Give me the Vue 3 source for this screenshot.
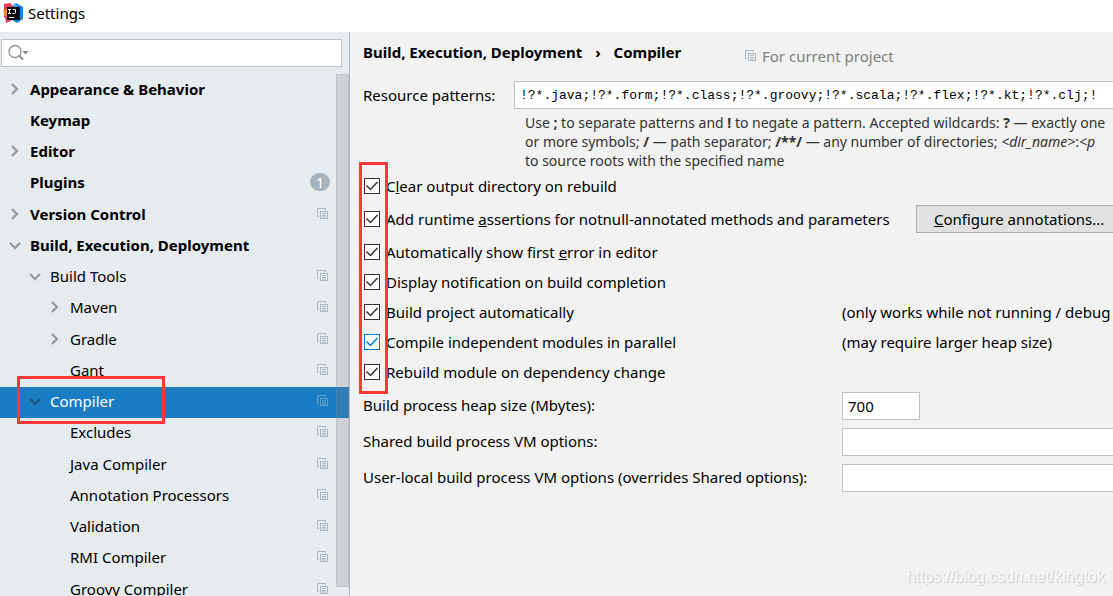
<script setup>
import { ref } from 'vue'

const tree = [
  { label: 'Appearance & Behavior', level: 0, arrow: 'right', bold: true },
  { label: 'Keymap', level: 0, bold: true },
  { label: 'Editor', level: 0, arrow: 'right', bold: true },
  { label: 'Plugins', level: 0, bold: true, badge: 1 },
  { label: 'Version Control', level: 0, arrow: 'right', bold: true, project: true },
  { label: 'Build, Execution, Deployment', level: 0, arrow: 'down', bold: true },
  { label: 'Build Tools', level: 1, arrow: 'down', project: true },
  { label: 'Maven', level: 2, arrow: 'right', project: true },
  { label: 'Gradle', level: 2, arrow: 'right', project: true },
  { label: 'Gant', level: 2, project: true },
  { label: 'Compiler', level: 1, arrow: 'down', project: true, selected: true },
  { label: 'Excludes', level: 2, project: true },
  { label: 'Java Compiler', level: 2, project: true },
  { label: 'Annotation Processors', level: 2, project: true },
  { label: 'Validation', level: 2, project: true },
  { label: 'RMI Compiler', level: 2, project: true },
  { label: 'Groovy Compiler', level: 2, project: true },
]

const options = ref([
  { id: 'clear', before: 'C', key: 'l', after: 'ear output directory on rebuild', on: true },
  { id: 'assert', before: 'Add runtime ', key: 'a', after: 'ssertions for notnull-annotated methods and parameters', on: true, button: true },
  { id: 'first-error', before: 'Automatically show first ', key: 'e', after: 'rror in editor', on: true },
  { id: 'notify', before: 'Display notification on build completion', on: true },
  { id: 'auto', before: 'Build project automatically', on: true, note: '(only works while not running / debug' },
  { id: 'parallel', before: 'Compile independent modules in parallel', on: true, note: '(may require larger heap size)', hot: true },
  { id: 'dependency', before: 'Rebuild module on dependency change', on: true },
])

const query = ref('')
const patterns = ref('!?*.java;!?*.form;!?*.class;!?*.groovy;!?*.scala;!?*.flex;!?*.kt;!?*.clj;!')
const heap = ref('700')
const sharedVm = ref('')
const localVm = ref('')
</script>

<template>
  <div class="window">
    <header class="titlebar">
      <svg class="logo" viewBox="0 0 20 20" aria-hidden="true">
        <path d="M1 1 L7 0 L10 3 L9 17 L5 19 L1 14 Z" fill="#f0385e" />
        <path d="M0 7 L6 6 L8 13 L2 14 Z" fill="#f98a2c" />
        <path d="M2 13 L10 14 L6 19 L3 20 Z" fill="#ef3f7d" />
        <path d="M10 2 L13 0 L20 4 L20 16 L14 20 L9 17 Z" fill="#1583ee" />
        <path d="M10 3 L12 0 L14 4 Z" fill="#5ab4f5" />
        <rect x="4" y="4" width="13" height="13" fill="#0b0b0b" />
        <path d="M5 6.5 h3 M6.5 6.5 v4 M5 10.5 h3 M10 6.5 h2.5 v3 q0 1 -1 1 h-2" fill="none" stroke="#fff" stroke-width="1" />
        <path d="M6 14.5 h5" stroke="#fff" stroke-width="1" />
      </svg>
      <span>Settings</span>
    </header>

    <div class="body">
      <aside class="sidebar">
        <div class="search">
          <svg class="search-icon" viewBox="0 0 22 18" aria-hidden="true">
            <circle cx="7" cy="7.5" r="6" fill="none" stroke="#8b9299" stroke-width="1.3" />
            <path d="M11 11.5 L15 15.5" stroke="#8b9299" stroke-width="2" />
            <path d="M14.5 7 h6 l-3 3.5 z" fill="#7f868d" />
          </svg>
          <input v-model="query" type="text" aria-label="Search settings" />
        </div>

        <nav class="tree-wrap" aria-label="Settings categories">
          <ul class="tree">
            <li
              v-for="item in tree"
              :key="item.label"
              :class="['item', 'level-' + item.level, { bold: item.bold, selected: item.selected }]"
            >
              <span class="arrow">
                <svg v-if="item.arrow === 'right'" viewBox="0 0 12 12" aria-hidden="true">
                  <path d="M3 1 L8 6 L3 11" />
                </svg>
                <svg v-else-if="item.arrow === 'down'" viewBox="0 0 12 12" aria-hidden="true">
                  <path d="M1 4 L6 9 L11 4" />
                </svg>
              </span>
              <a href="#">{{ item.label }}</a>
              <span v-if="item.badge" class="badge">{{ item.badge }}</span>
              <svg v-if="item.project" class="copy" viewBox="0 0 12 12" aria-hidden="true">
                <path d="M8.5 2 V.5 H.5 V8.5 H2" />
                <rect x="3.5" y="3.5" width="7" height="7" />
                <path d="M5 5.5 h4 M5 7.5 h4 M5 9 h4" />
              </svg>
              <span v-if="item.selected" class="mark mark-item"></span>
            </li>
          </ul>
          <div class="scrollbar"></div>
        </nav>
      </aside>

      <main class="content">
        <div class="heading">
          <h1>Build, Execution, Deployment <span class="sep">›</span> Compiler</h1>
          <p class="scope">
            <svg class="copy" viewBox="0 0 12 12" aria-hidden="true">
              <path d="M8.5 2 V.5 H.5 V8.5 H2" />
              <rect x="3.5" y="3.5" width="7" height="7" />
              <path d="M5 5.5 h4 M5 7.5 h4 M5 9 h4" />
            </svg>
            For current project
          </p>
        </div>

        <div class="patterns">
          <label for="patterns">Resource patterns:</label>
          <input id="patterns" v-model="patterns" class="field mono" type="text" />
        </div>
        <p class="hint">
          Use <b>;</b> to separate patterns and <b>!</b> to negate a pattern. Accepted wildcards: <b>?</b> — exactly one<br />
          or more symbols; <b>/</b> — path separator; <b>/**/</b> — any number of directories; <i>&lt;dir_name&gt;</i>:<i>&lt;p</i><br />
          to source roots with the specified name
        </p>

        <div class="options">
          <div v-for="o in options" :key="o.id" class="option" :class="{ tall: o.button }">
            <div class="choice">
              <span class="box" :class="{ hot: o.hot }">
                <input :id="o.id" v-model="o.on" type="checkbox" />
                <svg v-if="o.on" viewBox="0 0 16 16" aria-hidden="true"><path d="M2.5 7.5 L6.5 11.5 L13.5 4" /></svg>
              </span>
              <label :for="o.id">{{ o.before }}<u v-if="o.key">{{ o.key }}</u>{{ o.after }}</label>
            </div>
            <button v-if="o.button" type="button" class="configure"><u>C</u>onfigure annotations...</button>
            <span v-if="o.note">{{ o.note }}</span>
          </div>
          <span class="mark mark-options"></span>
        </div>

        <div class="row">
          <label for="heap">Build process heap size (Mbytes):</label>
          <input id="heap" v-model="heap" class="field short" type="text" />
        </div>
        <div class="row">
          <label for="shared">Shared build process VM options:</label>
          <input id="shared" v-model="sharedVm" class="field" type="text" />
        </div>
        <div class="row">
          <label for="local">User-local build process VM options (overrides Shared options):</label>
          <input id="local" v-model="localVm" class="field" type="text" />
        </div>
        <span class="watermark">https://blog.csdn.net/kingtok</span>
      </main>
    </div>
  </div>
</template>

<style>
html,
body,
#app {
  height: 100%;
}
body {
  margin: 0;
  overflow: hidden;
}
</style>

<style scoped>
* {
  box-sizing: border-box;
}
.window {
  display: flex;
  flex-direction: column;
  height: 100%;
  overflow: hidden;
  background: #fff;
  color: #000;
  font: 15px/20px "Noto Sans", "Open Sans", sans-serif;
  white-space: nowrap;
}
.titlebar {
  display: flex;
  flex: 0 0 32px;
  align-items: center;
  gap: 5px;
  padding: 0 3px 6px;
}
.logo {
  width: 20px;
  height: 20px;
}
.body {
  display: flex;
  flex: 1;
  min-height: 0;
}
.sidebar {
  flex: 0 0 350px;
  overflow: hidden;
  border-right: 1px solid #b4b6b9;
  background: #e6ebef;
}
.search {
  display: flex;
  align-items: center;
  height: 28px;
  margin: 7px 7px 7px 1px;
  padding-left: 6px;
  border: 1px solid #c2c4c6;
  background: #fff;
}
.search-icon {
  width: 22px;
  height: 18px;
}
.search input {
  flex: 1;
  min-width: 0;
  border: 0;
  outline: 0;
  background: none;
  font: inherit;
}
.tree-wrap {
  position: relative;
}
.tree {
  margin: 0;
  padding: 1px 0 0;
  list-style: none;
}
.item {
  position: relative;
  display: flex;
  align-items: center;
  height: 31px;
  padding-right: 20px;
  padding-bottom: 4px;
}
.item:nth-child(4n) {
  margin-bottom: 1px;
}
.item a {
  flex: 1;
  color: inherit;
  text-decoration: none;
}
.bold {
  font-weight: 700;
}
.level-0 {
  padding-left: 9px;
}
.level-1 {
  padding-left: 29px;
}
.level-2 {
  padding-left: 49px;
}
.arrow {
  display: flex;
  width: 21px;
}
.arrow svg {
  width: 12px;
  height: 12px;
  fill: none;
  stroke: #999c9f;
  stroke-width: 2.4;
}
.selected {
  background: #1a7dc4;
  color: #fff;
}
.selected .arrow svg {
  stroke: #1b5680;
}
.copy {
  width: 12px;
  height: 12px;
  fill: none;
  stroke: #adb8c0;
}
.selected .copy {
  stroke: #659fc5;
}
.badge {
  width: 20px;
  height: 18px;
  margin-right: -1px;
  border-radius: 9px;
  background: #a7b4bc;
  color: #fff;
  font-weight: 400;
  line-height: 18px;
  text-align: center;
}
.scrollbar {
  position: absolute;
  top: 0;
  right: 0;
  width: 13px;
  height: 513px;
  border: 1px solid rgba(150, 155, 160, 0.25);
  background: rgba(125, 125, 130, 0.22);
}
.mark {
  position: absolute;
  border: 3px solid #fb3737;
  pointer-events: none;
}
.mark-item {
  z-index: 1;
  top: -11px;
  left: 17px;
  width: 148px;
  height: 48px;
}
.mark-options {
  top: -9px;
  bottom: -7px;
  left: -4px;
  width: 29px;
}
.content {
  position: relative;
  flex: 1;
  min-width: 0;
  overflow: hidden;
  padding-left: 13px;
  background: #f2f2f2;
}
.heading {
  display: flex;
  gap: 60px;
  height: 45px;
  padding-top: 10px;
}
.heading h1 {
  min-width: 322px;
  margin: 0;
  font: inherit;
  font-weight: 700;
}
.sep {
  margin: 0 9px;
}
.scope {
  display: flex;
  align-items: center;
  gap: 5px;
  height: 20px;
  margin: 4px 0 0;
  color: #808080;
}
.patterns {
  display: grid;
  grid-template-columns: 151px 1fr;
  align-items: center;
  height: 36px;
}
.field {
  min-width: 0;
  height: 28px;
  margin-right: -20px;
  padding: 0 5px;
  border: 1px solid #c2c2c2;
  border-radius: 0;
  outline: 0;
  background: #fff;
  color: #000;
  font: inherit;
}
.field.mono {
  font: 13px "Liberation Mono", monospace;
}
.hint {
  margin: 0 0 1px 162px;
  color: #333;
  font-size: 14px;
  line-height: 19px;
}
.options {
  position: relative;
}
.option {
  display: grid;
  grid-template-columns: 479px 1fr;
  align-items: center;
  height: 30px;
}
.option.tall {
  grid-template-columns: 553px 1fr;
  height: 36px;
}
.choice {
  display: flex;
  align-items: center;
  gap: 6px;
}
.box {
  position: relative;
  display: flex;
  width: 17px;
  height: 16px;
  color: #333;
}
.box.hot {
  color: #0078d7;
}
.box input {
  width: 16px;
  height: 16px;
  margin: 0 0 0 1px;
  border: 1px solid currentColor;
  appearance: none;
  background: #fff;
  color: inherit;
}
.box svg {
  position: absolute;
  top: 0;
  left: 1px;
  width: 16px;
  height: 16px;
  fill: none;
  pointer-events: none;
  stroke: currentColor;
  stroke-width: 1.5;
}
.configure {
  justify-self: start;
  height: 28px;
  padding: 0 17px;
  border: 1px solid #adadad;
  background: #e1e1e1;
  color: #000;
  font: inherit;
}
.row {
  display: grid;
  grid-template-columns: 479px 1fr;
  align-items: center;
  height: 36px;
}
.row .field {
  margin-top: 2px;
}
.short {
  width: 78px;
}
.watermark {
  position: absolute;
  right: 8px;
  bottom: 9px;
  color: #f8f8f8;
  font: 16px/20px "Liberation Sans", sans-serif;
  text-shadow: 1px 1px 1px #c8c8c8;
}
</style>
